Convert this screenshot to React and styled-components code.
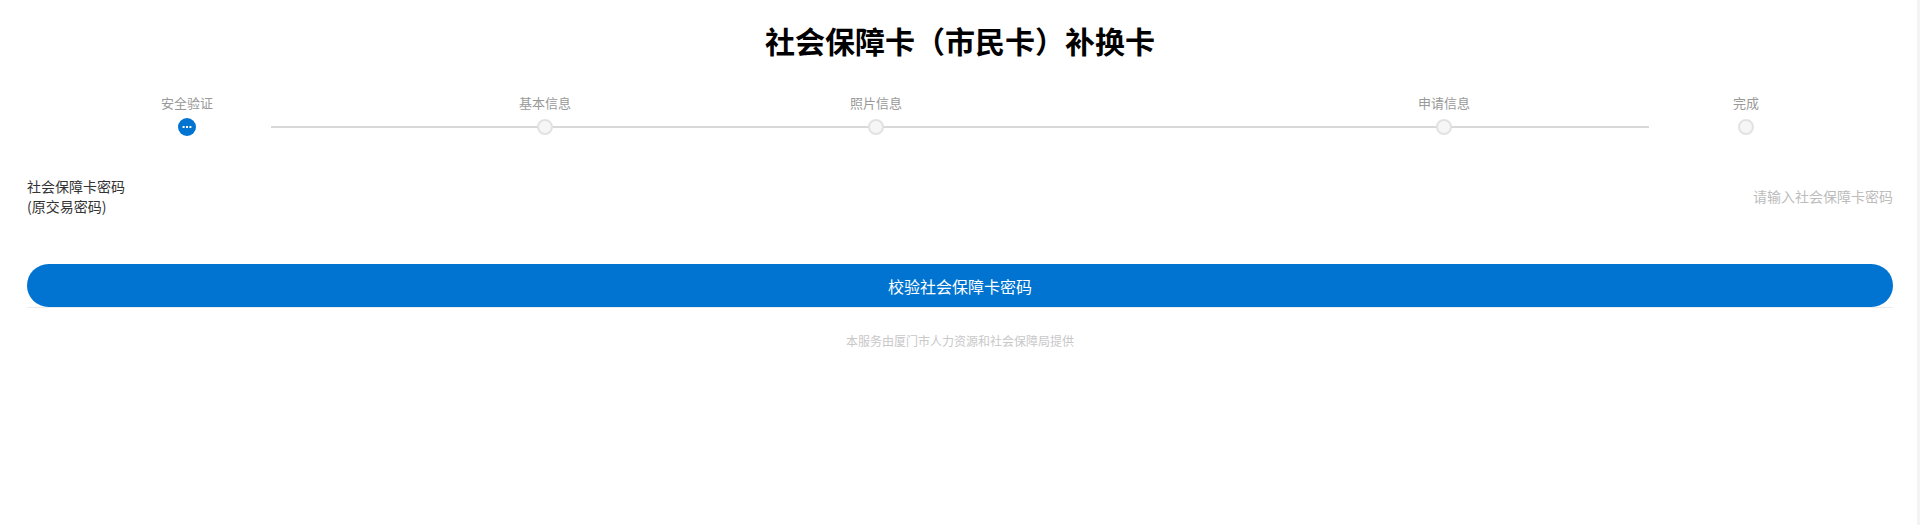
import React from "react";
import styled, {createGlobalStyle} from "styled-components";

const GlobalStyle = createGlobalStyle`
html, body {
  margin: 0;
  padding: 0;
  background: #fff;
}
body {
  font-family: "Noto Sans CJK SC", "Noto Sans", sans-serif;
}
`;

const Page = styled.div`
min-height: 100vh;
box-sizing: border-box;
padding: 22px 24px 0 27px;
border-right: 3px solid #f3f3f3;
`;

const Title = styled.h1`
margin: 0;
font-size: 30px;
line-height: 36px;
font-weight: 700;
color: #000;
text-align: center;
`;

// column widths give each step its spot on the bar
const Steps = styled.div`
display: grid;
grid-template-columns: 120px 80px 44px 234px 80px 251px 80px 488px 80px 165px 57px 80px 1fr;
grid-template-rows: 18px 6px 18px;
margin-top: 36px;
`;

const Step = styled.div`
grid-column: ${(p) => p.$col} / span 1;
grid-row: 1 / 4;
display: flex;
flex-direction: column;
align-items: center;
gap: 6px;
z-index: 1;
`;

const StepLabel = styled.span`
font-size: 13px;
line-height: 18px;
color: #999;
white-space: nowrap;
`;

const DotBox = styled.div`
height: 18px;
display: flex;
align-items: center;
justify-content: center;
`;

const Dot = styled.span`
width: 16px;
height: 16px;
box-sizing: border-box;
border-radius: 50%;
border: 2px solid #e2e2e2;
background: #f6f6f6;
`;

const Track = styled.div`
grid-column: 4 / 11;
grid-row: 3;
align-self: center;
height: 2px;
background: #d8d8d8;
`;

const FormRow = styled.label`
display: flex;
align-items: center;
margin-top: 40px;
height: 40px;
`;

const FieldName = styled.div`
font-size: 14px;
line-height: 20px;
color: #333;
white-space: nowrap;
`;

const Input = styled.input`
flex: 1;
border: none;
outline: none;
padding: 0;
text-align: right;
font-family: inherit;
font-size: 14px;
line-height: 20px;
color: #333;
background: transparent;
&::placeholder {
  color: #bcbcbc;
}
`;

const ButtonWrap = styled.div`
margin-top: 48px;
border-bottom: 1px solid #ececec;
`;

const Button = styled.button`
display: block;
width: 100%;
height: 43px;
border: none;
border-radius: 22px;
background: #0074d0;
color: #fff;
font-family: inherit;
font-size: 16px;
cursor: pointer;
`;

const Footer = styled.p`
margin: 25px 0 0;
font-size: 12px;
line-height: 16px;
color: #c8c8c8;
text-align: center;
`;

const ActiveDot = () => (
    <svg width="18" height="18" viewBox="0 0 18 18">
        <circle cx="9" cy="9" r="9" fill="#0074d0"/>
        <rect x="4.6" y="8" width="2" height="2" fill="#fff"/>
        <rect x="8" y="8" width="2" height="2" fill="#fff"/>
        <rect x="11.4" y="8" width="2" height="2" fill="#fff"/>
    </svg>
);

const steps = [
    {name: "安全验证", col: 2, active: true},
    {name: "基本信息", col: 5},
    {name: "照片信息", col: 7},
    {name: "申请信息", col: 9},
    {name: "完成", col: 12},
];

const App = () => {
    return (
        <>
            <GlobalStyle/>
            <Page>
                <Title>社会保障卡（市民卡）补换卡</Title>
                <Steps>
                    <Track/>
                    {steps.map((step) => (
                        <Step key={step.name} $col={step.col}>
                            <StepLabel>{step.name}</StepLabel>
                            <DotBox>{step.active ? <ActiveDot/> : <Dot/>}</DotBox>
                        </Step>
                    ))}
                </Steps>
                <FormRow>
                    <FieldName>社会保障卡密码<br/>(原交易密码)</FieldName>
                    <Input type={"password"} placeholder={"请输入社会保障卡密码"}/>
                </FormRow>
                <ButtonWrap>
                    <Button type={"button"}>校验社会保障卡密码</Button>
                </ButtonWrap>
                <Footer>本服务由厦门市人力资源和社会保障局提供</Footer>
            </Page>
        </>
    );
};

export default App;
